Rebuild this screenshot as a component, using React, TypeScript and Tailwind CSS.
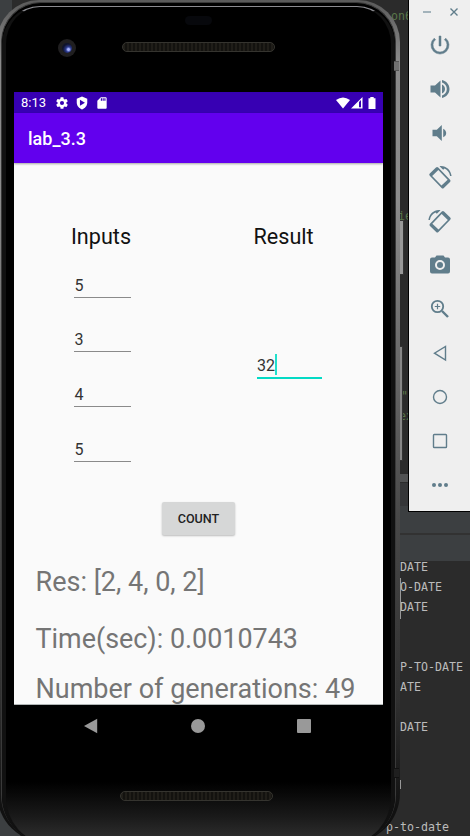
import type { ReactNode } from "react";

const mono = "font-['DejaVu_Sans_Mono',monospace]";

function IdeWindow() {
  const lines = ["  DATE", "  O-DATE", "  DATE", "", "", "  P-TO-DATE", "  ATE", "", "  DATE", "", "", "", "", "p-to-date"];
  return (
    <div className={`absolute inset-0 flex flex-col bg-[#2b2b2b] text-[11.63px] ${mono}`}>
      <div className="flex h-[474px] shrink-0 border-l-[12px] border-[#3c3f41]">
        <div className="flex flex-col pl-[379px] whitespace-pre text-[#587549]">
          <div className="h-[200px] pt-[6px] leading-[20px]">on6</div>
          <div className="h-[180px] pt-[6px] pl-[7px] leading-[20px]">ie</div>
          <div className="h-[20px] pt-[6px] pl-[10px] leading-[20px]">"</div>
          <div className="h-[20px] pt-[6px] pl-[8px] leading-[20px]">ex</div>
        </div>
      </div>
      <div className="h-[8px] shrink-0 bg-[#515253]" />
      <div className="h-[24px] shrink-0 border-t border-[#2b2b2b] bg-[#353638]" />
      <div className="h-[27px] shrink-0 bg-[#3c3f41]" />
      <div className="h-[2px] shrink-0 bg-[#323232]" />
      <div className="h-[26px] shrink-0 bg-[#3c3f41]" />
      <div className="flex flex-col border-l-[20px] border-[#3c3f41] text-[#bbbbbb]">
        {lines.map((line, i) => (
          <div key={i} className="h-[20px] shrink-0 pl-[366px] leading-[13px] whitespace-pre">
            {line}
          </div>
        ))}
      </div>
    </div>
  );
}

function Speaker({ className = "" }: { className?: string }) {
  return (
    <div className={`h-[10px] w-[153px] rounded-full border border-[#35342f] bg-[#151410] bg-[repeating-linear-gradient(90deg,#201e19_0_2px,#13120f_2px_4px)] ${className}`} />
  );
}

function Field({ value }: { value: string }) {
  return (
    <div className="mb-[27.7px] ml-[60px] flex h-[27px] w-[57px] items-start border-b border-[#8a8a8a] pl-[0.5px] text-[16px] leading-[29px] text-[#333]">
      {value}
    </div>
  );
}

function Screen() {
  return (
    <div className="ml-[3px] flex h-[613px] w-[369px] shrink-0 flex-col overflow-hidden border-b border-[#b0b5b5] bg-[#fafafa] font-[Roboto,sans-serif]">
      <div className="flex h-[21px] shrink-0 items-center bg-[#3700b3] pl-[7px] text-white">
        <span className="w-[33px] text-[13px] leading-[21px]">8:13</span>
        <svg className="ml-[1px] size-[14px]" viewBox="0 0 24 24" fill="currentColor">
          <path d="M19.43 12.98c.04-.32.07-.64.07-.98s-.03-.66-.07-.98l2.11-1.65a.5.5 0 0 0 .12-.64l-2-3.46a.5.5 0 0 0-.61-.22l-2.49 1a7.3 7.3 0 0 0-1.69-.98l-.38-2.65A.49.49 0 0 0 14 2h-4a.49.49 0 0 0-.49.42l-.38 2.65c-.61.25-1.17.59-1.69.98l-2.49-1a.49.49 0 0 0-.61.22l-2 3.46a.49.49 0 0 0 .12.64l2.11 1.65c-.04.32-.07.65-.07.98s.03.66.07.98l-2.11 1.65a.5.5 0 0 0-.12.64l2 3.46c.12.22.39.3.61.22l2.49-1c.52.4 1.08.73 1.69.98l.38 2.65c.03.24.24.42.49.42h4c.25 0 .46-.18.49-.42l.38-2.65a7.3 7.3 0 0 0 1.69-.98l2.49 1c.23.09.49 0 .61-.22l2-3.46a.5.5 0 0 0-.12-.64zM12 15.5a3.5 3.5 0 1 1 0-7 3.5 3.5 0 0 1 0 7z" />
        </svg>
        <svg className="ml-[6px] size-[14px]" viewBox="0 0 24 24">
          <path fill="#fff" d="M12 1 3 4.500v6.800C3 17 7 21.500 12 23c5-1.500 9-6 9-11.700V4.500z" />
          <path fill="#3700b3" d="M8.500 6.500v10l8.500-5z" />
        </svg>
        <svg className="ml-[6px] size-[14px]" viewBox="0 0 24 24" fill="currentColor">
          <path d="M18 2h-8L4 8v12c0 1.100.9 2 2 2h12c1.100 0 2-.9 2-2V4c0-1.100-.9-2-2-2zm-6 6h-2V4h2v4zm3 0h-2V4h2v4zm3 0h-2V4h2v4z" />
        </svg>
        <svg className="ml-auto h-[12px] w-[14px]" viewBox="0 0 14 12" fill="currentColor">
          <path d="M0 3Q7-2 14 3L7 11.500z" />
        </svg>
        <svg className="ml-[1px] h-[12px] w-[12px]" viewBox="0 0 12 12">
          <path fill="#fff" fillRule="evenodd" d="M0 11.500 11.500 0v11.500zM8 5v5.200h2V3z" />
        </svg>
        <svg className="mr-[7px] ml-[5px] h-[12px] w-[8px]" viewBox="0 0 8 12" fill="currentColor">
          <path d="M2.300 0h3.400v1.200h1.800V12H.5V1.200h1.800z" />
        </svg>
      </div>
      <div className="z-10 flex h-[50px] shrink-0 items-center bg-[#6200ee] pl-[14px] text-[18px] font-medium text-white shadow-[0_1px_2px_rgba(0,0,0,0.35)]">
        <span className="pt-px">lab_3.3</span>
      </div>
      <div className="flex h-[308px] shrink-0 pt-[58px]">
        <div className="w-[200px]">
          <div className="mb-[20.6px] ml-[57px] h-[29px] text-[21.600px] leading-[32px] text-[#111]">Inputs</div>
          <Field value="5" />
          <Field value="3" />
          <Field value="4" />
          <Field value="5" />
        </div>
        <div className="flex-1">
          <div className="ml-[39.5px] h-[29px] text-[21.600px] leading-[32px] text-[#111]">Result</div>
          <div className="mt-[102px] ml-[43px] flex h-[27px] w-[65px] border-b-2 border-[#03dac5] text-[16px] leading-[28px] text-[#333]">
            32
            <span className="mt-[2px] h-[21px] w-[2px] bg-[#21e0cc]" />
          </div>
        </div>
      </div>
      <div className="flex h-[94px] shrink-0 items-start pt-[31px] pl-[148px]">
        <button className="h-[33px] w-[73px] rounded-[2px] bg-[#d6d7d7] pt-px text-[12.6px] font-medium text-[#222] shadow-[0_1px_2px_rgba(0,0,0,0.25)]">COUNT</button>
      </div>
      <div className="flex flex-col pl-[21.5px] text-[27px] leading-[34px] whitespace-nowrap text-[#757575]">
        <div className="h-[57px]">Res: [2, 4, 0, 2]</div>
        <div className="h-[50px] text-[26.9px]">Time(sec): 0.0010743</div>
        <div>Number of generations: 49</div>
      </div>
    </div>
  );
}

function Phone() {
  return (
    <div className="absolute top-0 -left-[3px] h-[843px] w-[403px] rounded-t-[42px] rounded-b-[50px] bg-[linear-gradient(180deg,#5a5a5a_0,#8a8a8a_60px,#8c8c8c_200px,#707070_330px,#484848_520px,#303030_700px,#111_810px)] pt-[2px] pr-[4px] pl-[4px]">
      <div className="h-full w-full rounded-t-[40px] rounded-b-[48px] border-x border-t border-[#3a3a3a] bg-black pt-[3px]">
        <div className="flex h-full w-full flex-col rounded-t-[38px] rounded-b-[46px] border-x-4 border-t border-x-[#111] border-t-[#8b8b90] bg-[linear-gradient(180deg,#000_775px,#1a1a1a_810px,#303030_834px)] pl-[5px]">
          <div className="flex h-[85px] w-full shrink-0 flex-col">
            <div className="mt-[9px] ml-[174px] h-[9px] w-[27px] rounded-full bg-[#07080c]" />
            <div className="mt-[14px] flex items-center pl-[47px]">
              <div className="flex size-[18px] items-center justify-center rounded-full bg-[#201f20]">
                <div className="size-[10px] rounded-full bg-[radial-gradient(circle_at_65%_65%,#a9b5ff_0_10%,#2c3b8f_28%,#10142c_60%)]" />
              </div>
              <Speaker className="-mt-[2px] ml-[46px]" />
            </div>
          </div>
          <Screen />
          <div className="ml-[3px] flex h-[42px] w-[369px] shrink-0 items-center pb-[1px] pl-[69px]">
            <svg className="size-[16px]" viewBox="0 0 16 16" fill="#999"><path d="M14.200.8v14.400L1 8z" /></svg>
            <div className="ml-[92px] size-[14px] rounded-full bg-[#999]" />
            <div className="ml-[92px] size-[14px] rounded-[1px] bg-[#999]" />
          </div>
          <Speaker className="mt-[44px] ml-[109px] shrink-0" />
        </div>
      </div>
      <div className="absolute top-[61px] right-px h-[10px] w-[5px] border-y border-[#555] bg-[#707070]" />
      <div className="absolute top-[768px] right-px h-[10px] w-[5px] border-y border-[#111] bg-[#1f1f1f]" />
    </div>
  );
}

function Glyph({ children }: { children: ReactNode }) {
  return (
    <div className="flex h-[44px] items-center justify-center">
      <svg className="size-[24px] overflow-visible" viewBox="0 0 24 24" fill="#607d8b">{children}</svg>
    </div>
  );
}

const rotate = (
  <>
    <g transform="translate(11.900 12.800) rotate(46)">
      <path fillRule="evenodd" d="M-8.500-5.900h17a1.600 1.600 0 0 1 1.600 1.600v8.600a1.600 1.600 0 0 1-1.600 1.600h-17a1.600 1.600 0 0 1-1.600-1.600v-8.600a1.600 1.600 0 0 1 1.600-1.600zM-6.700-4.300v8.600H6.700v-8.600z" />
    </g>
    <path d="M11.500 1.200C17.700.3 22.800 4.900 23.600 11h-1.500c-.5-3.300-2.600-6.200-5.600-7.500l-1.300 1.300z" />
  </>
);

function Toolbar() {
  return (
    <div className="absolute top-0 left-[408px] h-[512px] w-[62px] border-b border-l border-black bg-[#efefef]">
      <div className="flex h-[23px] items-center pt-[1px] pl-[14px]">
        <div className="h-[2px] w-[8px] bg-[#a3b3bb]" />
        <svg className="ml-[19px] size-[8px]" viewBox="0 0 8 8" stroke="#607d8b" strokeWidth="1.400"><path d="m.5.5 7 7m0-7-7 7" /></svg>
      </div>
      <Glyph><path d="M13 3h-2v10h2zm4.800 2.200-1.400 1.400A7 7 0 1 1 7.600 6.600L6.200 5.200a9 9 0 1 0 11.600 0z" stroke="#607d8b" strokeWidth=".5" /></Glyph>
      <Glyph><path d="M2.500 8.500v7h4.500l5.500 5v-17L7 8.500zM14 7.500v9c1.800-.8 3-2.500 3-4.500s-1.200-3.700-3-4.500zM14 3v2.500c3 .8 4.800 3.400 4.800 6.500s-1.800 5.700-4.800 6.500V21c4.300-.9 7.500-4.600 7.500-9S18.300 3.900 14 3z" /></Glyph>
      <Glyph><path d="M4.500 8.700v6.600h4.300l5 4.700V4l-5 4.700zM15.200 7.700v8.600c1.700-.7 3-2.300 3-4.300s-1.300-3.600-3-4.300z" /></Glyph>
      <Glyph>{rotate}</Glyph>
      <Glyph><g transform="matrix(-1 0 0 1 24 0)">{rotate}</g></Glyph>
      <Glyph><path fillRule="evenodd" d="M8.500 2.500 7 4.500H4a2 2 0 0 0-2 2v12a2 2 0 0 0 2 2h16a2 2 0 0 0 2-2v-12a2 2 0 0 0-2-2h-3l-1.500-2zM12 7a5 5 0 1 1 0 10 5 5 0 0 1 0-10z" /><circle cx="12" cy="12" r="3" /></Glyph>
      <Glyph><g fill="none" stroke="#607d8b"><circle cx="9.500" cy="9.500" r="5.700" strokeWidth="1.800" /><path d="m14 14 6 6" strokeWidth="2.400" /><path d="M9.500 6.800v5.400M6.800 9.500h5.400" strokeWidth="1.200" /></g></Glyph>
      <Glyph><path d="M17.500 5.500v13.500L6.500 12.200z" fill="none" stroke="#607d8b" strokeWidth="1.400" /></Glyph>
      <Glyph><circle cx="12" cy="12" r="6.500" fill="none" stroke="#607d8b" strokeWidth="1.400" /></Glyph>
      <Glyph><rect x="5.500" y="5.500" width="13" height="13" rx=".8" fill="none" stroke="#607d8b" strokeWidth="1.400" /></Glyph>
      <Glyph><circle cx="6" cy="12" r="2" /><circle cx="12" cy="12" r="2" /><circle cx="18" cy="12" r="2" /></Glyph>
    </div>
  );
}

export default function App() {
  return (
    <div className="relative h-[836px] w-[470px] overflow-hidden bg-[#2b2b2b]">
      <IdeWindow />
      <div className="absolute top-[220px] left-[397px] h-[55px] w-[7px] border border-[#333] bg-[#999]" />
      <div className="absolute top-[346px] left-[397px] h-[115px] w-[6px] border border-[#333] bg-[#888]" />
      <div className="absolute top-[578px] left-[400px] h-[41px] w-px bg-[#999]" />
      <div className="absolute top-[780px] left-[400px] h-[9px] w-px bg-[#999]" />
      <Phone />
      <Toolbar />
    </div>
  );
}
